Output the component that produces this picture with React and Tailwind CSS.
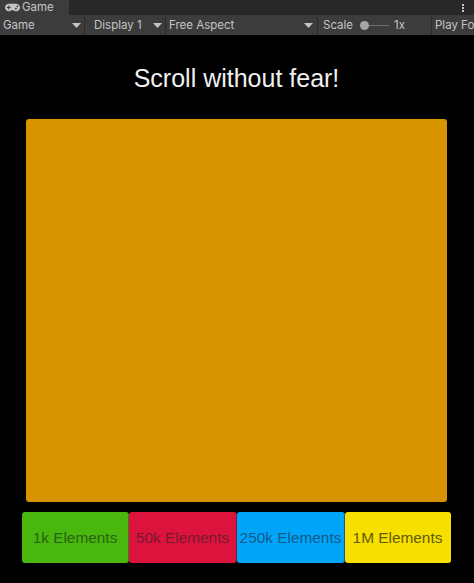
import { FaGamepad } from 'react-icons/fa'

const Caret = () => (
	<svg width="9" height="5" viewBox="0 0 9 5" className="shrink-0">
		<path d="M0 0h9L4.5 5z" fill="#c4c4c4" />
	</svg>
)

const buttons = [
	{ label: '1k Elements', cls: 'w-[107px] bg-[#4ab70f] text-[#26650f] border-[#3c7a1c]' },
	{ label: '50k Elements', cls: 'w-[108px] bg-[#dc133c] text-[#7a1832] border-[#5e2a40]' },
	{ label: '250k Elements', cls: 'w-[108px] bg-[#00a5fa] text-[#115a88] border-[#1f5d80]' },
	{ label: '1M Elements', cls: 'w-[106px] bg-[#f7e000] text-[#635a05] border-[#f7e000]' },
]

export default function App() {
	return (
		<div className="w-[474px] h-[583px] overflow-hidden bg-black flex flex-col font-['Inter',sans-serif]">
			<div className="h-[15px] bg-[#282828] flex justify-between shrink-0">
				<div className="w-[69px] h-[15px] bg-[#3c3c3c] flex items-center gap-[2px] pl-[5px] text-[11.5px] text-[#c4c4c4]">
					<FaGamepad className="text-[15px] text-[#c4c4c4]" />
					<span className="pt-[1px]">Game</span>
				</div>
				<div className="flex flex-col gap-[1px] justify-center pr-[10px]">
					<div className="w-[2px] h-[2px] bg-[#c4c4c4]" />
					<div className="w-[2px] h-[2px] bg-[#c4c4c4]" />
					<div className="w-[2px] h-[2px] bg-[#c4c4c4]" />
				</div>
			</div>
			<div className="h-[20px] pt-[1px] bg-[#3c3c3c] flex text-[11.5px] text-[#c4c4c4] shrink-0 whitespace-nowrap overflow-hidden">
				<div className="w-[85px] shrink-0 flex items-center justify-between pl-[3px] pr-[3px] border-r border-[#2b2b2b]">
					<span>Game</span>
					<Caret />
				</div>
				<div className="w-[81px] shrink-0 flex items-center justify-between pl-[9px] pr-[3px] border-r border-[#2b2b2b]">
					<span>Display 1</span>
					<Caret />
				</div>
				<div className="w-[152px] shrink-0 flex items-center justify-between pl-[3px] pr-[4px] border-r border-[#2b2b2b]">
					<span>Free Aspect</span>
					<Caret />
				</div>
				<div className="w-[114px] shrink-0 flex items-center pl-[5px] border-r border-[#2b2b2b]">
					<span>Scale</span>
					<div className="ml-[7px] w-[9px] h-[9px] rounded-full bg-[#a6a6a6] shrink-0" />
					<div className="w-[20px] h-[1px] bg-[#6e6e6e] shrink-0" />
					<span className="ml-[5px]">1x</span>
				</div>
				<div className="pl-[3px] shrink-0 flex items-center">
					<span>Play Focused</span>
				</div>
			</div>
			<div className="flex flex-col items-center pl-[26px] pr-[27px]">
				<h1 className="mt-[27px] h-[32px] leading-[32px] text-[25px] text-[#f0f0f0] font-['Liberation_Sans',sans-serif]">Scroll without fear!</h1>
				<div className="mt-[25px] w-full h-[383px] rounded-[3px] bg-[#d79400]" />
			</div>
			<div className="mt-[10px] ml-[22px] flex font-['Liberation_Sans',sans-serif] text-[15.4px]">
				{buttons.map(b => (
					<div key={b.label} className={`h-[51px] shrink-0 flex items-center justify-center whitespace-nowrap rounded-[3px] border-r ${b.cls}`}>
						{b.label}
					</div>
				))}
			</div>
		</div>
	)
}
